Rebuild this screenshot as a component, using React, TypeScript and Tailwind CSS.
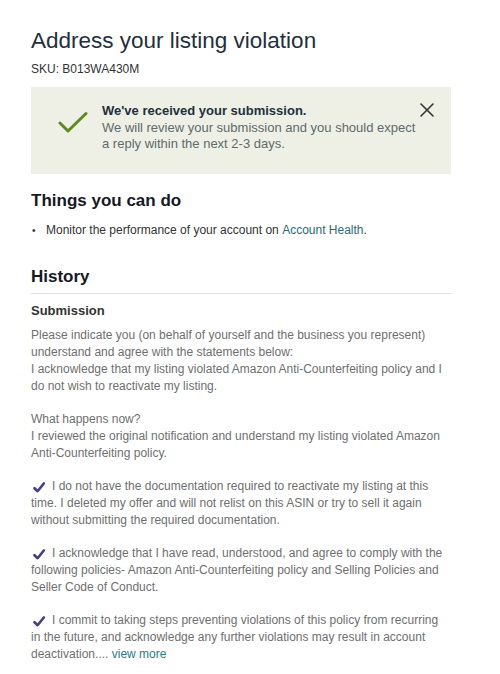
import { X } from "lucide-react";

const Tick = () => (
  <svg className="inline-block align-[-1px] -my-[2px] ml-[2px] mr-[7px] w-[12px] h-[11px]" viewBox="0 0 12 11" fill="none">
    <path d="M1.5 6.2L4.6 9.2L10.8 1.5" stroke="#4b3d7e" strokeWidth={2.6} strokeLinecap="round" strokeLinejoin="round" />
  </svg>
);

export default function App() {
  return (
    <div className="min-h-[674px] bg-white font-['Liberation_Sans',Arial,sans-serif]">
      <div className="pl-[31px] pr-[49px] pt-[26px]">
        <h1 className="text-[22.5px] leading-[30px] text-[#232f3e]">Address your listing violation</h1>
        <div className="mt-[6px] text-[12px] leading-[15px] text-[#333]">SKU: B013WA430M</div>

        {/* Success alert */}
        <div className="mt-[10px] bg-[#eef0e6] h-[87px] flex pt-[16px]">
          <svg className="ml-[27px] mt-[8px] w-[30px] h-[22px] shrink-0" viewBox="0 0 30 22" fill="none">
            <path d="M2 12l8 8L28 2.5" stroke="#5b8a1f" strokeWidth={3} strokeLinecap="round" strokeLinejoin="round" />
          </svg>
          <div className="ml-[14px] flex-1 whitespace-nowrap text-[13px] leading-[16.5px]">
            <div className="font-bold text-[#232f3e]">We've received your submission.</div>
            <div className="text-[#5f6b6b]">
              We will review your submission and you should expect
              <br />a reply within the next 2-3 days.
            </div>
          </div>
          <X className="mr-[12px] -mt-[5px] w-[24px] h-[24px] shrink-0 text-[#333]" strokeWidth={1.6} />
        </div>

        <h2 className="mt-[16px] text-[17px] leading-[22px] font-bold text-[#16191f]">Things you can do</h2>
        <ul className="mt-[11px] text-[12px] leading-[15px] text-[#333]">
          <li className="flex items-center">
            <span className="w-[15px] pl-[1px] text-[10px]">•</span>
            Monitor the performance of your account on&nbsp;
            <span className="text-[#2a6a7a]">Account Health</span>.
          </li>
        </ul>

        <h2 className="mt-[28px] text-[17px] leading-[22px] font-bold text-[#16191f]">History</h2>
        <div className="mt-[5px] border-t border-[#dde0e0]" />
        <h3 className="mt-[8px] text-[13px] leading-[17px] font-bold text-[#333]">Submission</h3>

        <div className="mt-[8px] pr-[4px] text-[12px] leading-[17px] text-[#6f6f6f]">
          <p>
            Please indicate you (on behalf of yourself and the business you represent) understand and agree with the
            statements below:
            <br />I acknowledge that my listing violated Amazon Anti-Counterfeiting policy and I do not wish to
            reactivate my listing.
          </p>
          <p className="mt-[16px]">
            What happens now?
            <br />I reviewed the original notification and understand my listing violated Amazon Anti-Counterfeiting
            policy.
          </p>
          <p className="mt-[16px]">
            <Tick />I do not have the documentation required to reactivate my listing at this time. I deleted my offer
            and will not relist on this ASIN or try to sell it again without submitting the required documentation.
          </p>
          <p className="mt-[16px]">
            <Tick />I acknowledge that I have read, understood, and agree to comply with the following policies- Amazon
            Anti-Counterfeiting policy and Selling Policies and Seller Code of Conduct.
          </p>
          <p className="mt-[16px]">
            <Tick />I commit to taking steps preventing violations of this policy from recurring in the future, and
            acknowledge any further violations may result in account deactivation....{" "}
            <span className="text-[#2a7a8a]">view more</span>
          </p>
        </div>
      </div>
    </div>
  );
}
